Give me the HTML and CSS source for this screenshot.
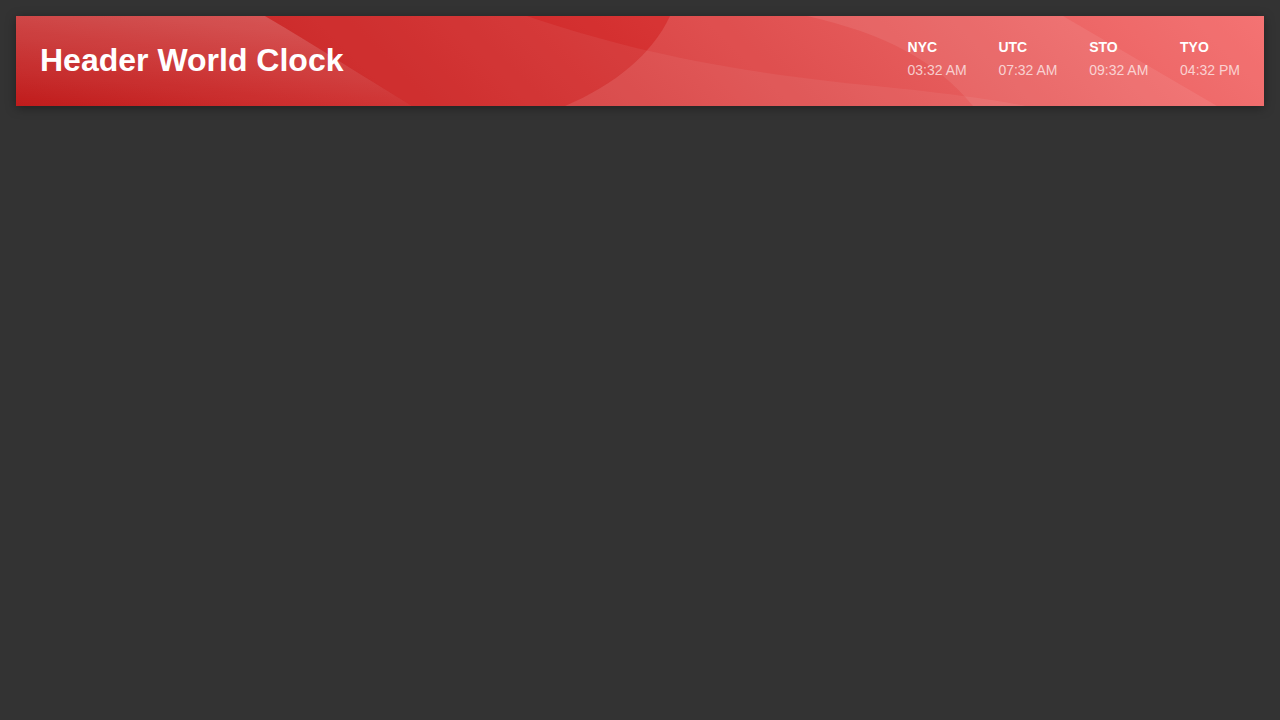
FILE: index.html
```html
<!DOCTYPE html>
<html lang="en">
<head>
<meta charset="utf-8">
<title>Header World Clock</title>
<link rel="stylesheet" href="styles.css">
</head>
<body>
<header class="header">
  <svg class="header-bg" viewBox="0 0 1248 90" preserveAspectRatio="none" aria-hidden="true">
    <defs>
      <linearGradient id="fadeL" x1="0" y1="0" x2="0" y2="1">
        <stop offset="0" stop-color="#fff" stop-opacity="0.17"/>
        <stop offset="1" stop-color="#fff" stop-opacity="0"/>
      </linearGradient>
    </defs>
    <path d="M0,0 L249,0 C300,30 350,62 396,90 L0,90 Z" fill="url(#fadeL)"/>
    <path d="M249,0 L654,0 C636,38 600,68 549,90 L396,90 C350,62 300,30 249,0 Z" fill="rgba(200,10,10,0.22)"/>
    <path d="M654,0 L1248,0 L1248,90 L549,90 C600,68 636,38 654,0 Z" fill="rgba(255,255,255,0.06)"/>
    <path d="M0,0 L511,0 C600,30 700,55 860,70 C930,77 980,84 1010,90 L0,90 Z" fill="rgba(255,255,255,0.06)"/>
    <path d="M791,0 L1047,0 L1201,90 L957,90 C920,45 870,18 791,0 Z" fill="rgba(255,255,255,0.08)"/>
  </svg>
  <h1 class="title">Header World Clock</h1>
  <div class="clocks">
    <div class="clock">
      <div class="clock-city">NYC</div>
      <div class="clock-time">03:32 AM</div>
    </div>
    <div class="clock">
      <div class="clock-city">UTC</div>
      <div class="clock-time">07:32 AM</div>
    </div>
    <div class="clock">
      <div class="clock-city">STO</div>
      <div class="clock-time">09:32 AM</div>
    </div>
    <div class="clock">
      <div class="clock-city">TYO</div>
      <div class="clock-time">04:32 PM</div>
    </div>
  </div>
</header>
</body>
</html>
```

FILE: styles.css
```css
* {
  box-sizing: border-box;
}

html, body {
  margin: 0;
  height: 100%;
}

body {
  background: #333333;
  padding: 16px;
  font-family: "Liberation Sans", Arial, sans-serif;
  color: #ffffff;
}

.header {
  position: relative;
  overflow: hidden;
  height: 90px;
  display: flex;
  align-items: center;
  justify-content: space-between;
  padding: 0 24px;
  background: linear-gradient(45deg, #bd0e0e 0%, #f46b6b 100%);
  box-shadow: 0 2px 10px rgba(0, 0, 0, 0.35);
}

.header-bg {
  position: absolute;
  inset: 0;
  width: 100%;
  height: 100%;
  display: block;
}

.title {
  position: relative;
  margin: 0 0 2px;
  font-size: 32px;
  font-weight: 700;
  line-height: normal;
}

.clocks {
  position: relative;
  display: flex;
  gap: 31.7px;
  margin-bottom: 6px;
}

.clock {
  display: flex;
  flex-direction: column;
}

.clock-city {
  font-size: 14px;
  font-weight: 700;
  line-height: 16px;
}

.clock-time {
  margin-top: 7px;
  font-size: 14px;
  line-height: 16px;
  color: rgba(255, 255, 255, 0.7);
}
```
